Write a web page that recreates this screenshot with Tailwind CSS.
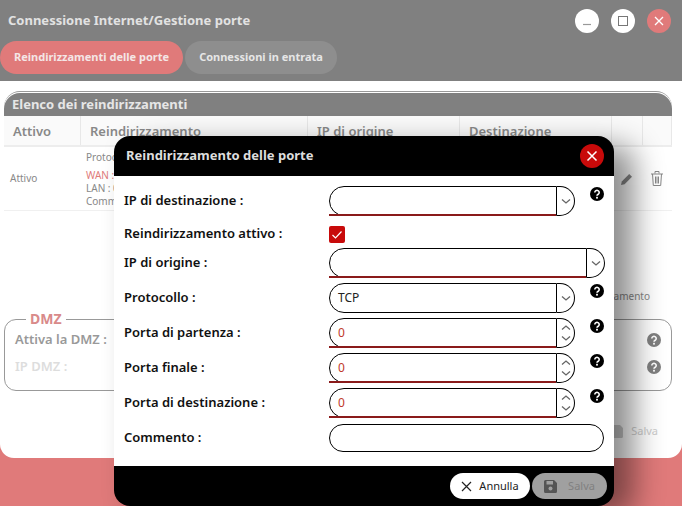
<!DOCTYPE html>
<html lang="it">
<head>
<meta charset="UTF-8">
<title>Gestione porte</title>
<script src="https://cdn.jsdelivr.net/npm/@tailwindcss/browser@4"></script>
</head>
<body class="relative h-[506px] w-[682px] overflow-hidden bg-[#e07a7a] font-['Noto_Sans','Liberation_Sans',sans-serif]">
  <!-- window -->
  <div class="flex h-[458px] flex-col overflow-hidden rounded-b-[14px] bg-white">
    <div class="h-[81px] shrink-0 bg-[#808080]">
      <div class="flex h-[41px] items-center justify-between pr-[11px] pl-2">
        <h1 class="text-[13px] font-bold text-[#e2e2e2]">Connessione Internet/Gestione porte</h1>
        <div class="flex gap-3">
          <button class="flex h-6 w-6 items-center justify-center rounded-full bg-white">
            <svg width="12" height="12" viewBox="0 0 12 12"><path d="M2 9.5h8" stroke="#999" stroke-width="1.2"/></svg>
          </button>
          <button class="flex h-6 w-6 items-center justify-center rounded-full bg-white">
            <svg width="12" height="12" viewBox="0 0 12 12"><rect x="1.5" y="1.5" width="9" height="9" fill="none" stroke="#777" stroke-width="1"/></svg>
          </button>
          <button class="flex h-6 w-6 items-center justify-center rounded-full bg-[#e07a7a]">
            <svg width="12" height="12" viewBox="0 0 12 12"><path d="M2 2l8 8M10 2l-8 8" stroke="#fff" stroke-width="1.3"/></svg>
          </button>
        </div>
      </div>
      <div class="flex gap-[2px]">
        <button class="flex h-[33px] w-[183px] items-center justify-center rounded-full bg-[#e07a7a] text-[11px] font-bold text-[#f4e6e6]">Reindirizzamenti delle porte</button>
        <button class="flex h-[33px] w-[152px] items-center justify-center rounded-full bg-[#8e8e8e] text-[11px] font-bold text-[#e6e6e6]">Connessioni in entrata</button>
      </div>
    </div>

    <div class="flex flex-1 flex-col pt-[10px] pr-[10px] pl-1">
      <!-- table -->
      <div class="rounded-t-[16px] border-t border-t-[#999] pt-[1px]">
        <div class="flex h-[23px] items-center rounded-t-[16px] bg-[#808080] pl-2 text-[13px] font-bold text-[#e6e6e6]">Elenco dei reindirizzamenti</div>
      </div>
      <div class="grid h-[31px] grid-cols-[76px_227px_152px_152px_31px_30px] border-b-2 border-[#ededed] bg-[#fafafa] text-[13px] font-semibold text-[#888]">
        <div class="pt-[6px] pl-[9px]">Attivo</div>
        <div class="border-l border-[#e8e8e8] pt-[6px] pl-[9px]">Reindirizzamento</div>
        <div class="border-l border-[#e8e8e8] pt-[6px] pl-[9px]">IP di origine</div>
        <div class="border-l border-[#e8e8e8] pt-[6px] pl-[9px]">Destinazione</div>
        <div class="border-l border-[#e8e8e8]"></div>
        <div class="border-x border-[#e8e8e8]"></div>
      </div>
      <div class="grid h-[64px] grid-cols-[76px_227px_152px_152px_31px_30px] border-b border-[#f0f0f0] text-[10px] text-[#888]">
        <div class="flex items-center pl-[6px]">Attivo</div>
        <div class="pt-[4px] pl-[6px] leading-[13px]">
          <div class="mb-[5px]">Protocollo : TCP</div>
          <div class="text-[#e07a7a]">WAN : 0</div>
          <div>LAN : 0</div>
          <div>Commento :</div>
        </div>
        <div></div>
        <div></div>
        <div class="flex items-center justify-center">
          <svg width="14" height="14" viewBox="0 0 14 14"><path d="M1 13l.8-3.6 7.4-7.4 2.8 2.8-7.4 7.4z" fill="#888"/></svg>
        </div>
        <div class="flex items-center justify-center">
          <svg width="14" height="17" viewBox="0 0 14 17" fill="none" stroke="#888" stroke-width="1"><path d="M1 4h12M5 3.5V1.5h4v2M2.5 4l.8 11.5h7.4L11.5 4M5.5 6.5v7M7 6.5v7M8.5 6.5v7"/></svg>
        </div>
      </div>

      <div class="mt-[78px] pr-[22px] text-right text-[10px] text-[#888]">Attiva il reindirizzamento</div>

      <fieldset class="mt-[8px] h-[79px] rounded-[12px] border border-[#999] px-[10px]">
        <legend class="ml-[11px] px-1 text-[14px] leading-[14px] font-bold text-[#d98a8a]">DMZ</legend>
        <div class="flex h-[27px] items-center justify-between text-[13px] font-semibold text-[#999]">
          <span>Attiva la DMZ :</span>
          <svg width="14" height="14" viewBox="0 0 14 14"><circle cx="7" cy="7" r="7" fill="#808080"/><path d="M4.8 5.4a2.2 2.1 0 1 1 3.4 1.8c-.8.5-1.2.9-1.2 1.6" fill="none" stroke="#fff" stroke-width="1.6"/><rect x="6.1" y="9.8" width="1.8" height="1.8" fill="#fff"/></svg>
        </div>
        <div class="flex h-[27px] items-center justify-between text-[13px] font-semibold text-[#ddd]">
          <span>IP DMZ :</span>
          <svg width="14" height="14" viewBox="0 0 14 14"><circle cx="7" cy="7" r="7" fill="#808080"/><path d="M4.8 5.4a2.2 2.1 0 1 1 3.4 1.8c-.8.5-1.2.9-1.2 1.6" fill="none" stroke="#fff" stroke-width="1.6"/><rect x="6.1" y="9.8" width="1.8" height="1.8" fill="#fff"/></svg>
        </div>
      </fieldset>

      <div class="mt-[32px] flex items-center justify-end gap-[8px] pr-[14px] text-[11px] text-[#ccc]">
        <svg width="13" height="13" viewBox="0 0 13 13"><path d="M0 1.5A1.5 1.5 0 0 1 1.5 0H10l3 3v8.5a1.5 1.5 0 0 1-1.500 1.500h-10A1.500 1.500 0 0 1 0 11.500z" fill="#ccc"/></svg>
        <span>Salva</span>
      </div>
    </div>
  </div>

  <!-- modal -->
  <div class="absolute top-[136px] left-[114px] flex h-[370px] w-[500px] flex-col overflow-hidden rounded-[16px] bg-black shadow-[20px_10px_30px_rgba(0,0,0,0.45)]">
    <div class="flex h-10 shrink-0 items-center justify-between pr-[10px] pl-3">
      <h2 class="text-[13px] font-bold text-[#ddd]">Reindirizzamento delle porte</h2>
      <button class="flex h-6 w-6 items-center justify-center rounded-full bg-[#c80a0a]">
        <svg width="12" height="12" viewBox="0 0 12 12"><path d="M1.500 1.500l9 9M10.500 1.500l-9 9" stroke="#fff" stroke-width="1.500"/></svg>
      </button>
    </div>

    <div class="flex flex-1 flex-col bg-white pt-[10px] pl-[10px]">
      <div class="mb-[5px] flex h-[30px] items-center">
        <label class="w-[205px] text-[13px] font-semibold text-[#111]">IP di destinazione :</label>
        <div class="relative h-[30px] w-[228px] rounded-l-[15px] border border-black bg-white">
          <span class="absolute right-0 -bottom-px -left-px h-[2px] bg-[#8a1a1a]"></span>
        </div>
        <div class="flex h-[30px] w-[18px] items-center justify-center rounded-r-[15px] border border-l-0 border-black">
          <svg width="10" height="7" viewBox="0 0 10 7"><path d="M1 1.500l4 3.500 4-3.500" fill="none" stroke="#666" stroke-width="1.300"/></svg>
        </div>
        <svg class="mb-[14px] ml-[15px]" width="14" height="14" viewBox="0 0 14 14"><circle cx="7" cy="7" r="7" fill="#000"/><path d="M4.800 5.400a2.200 2.100 0 1 1 3.400 1.800c-.8.500-1.200.900-1.200 1.600" fill="none" stroke="#fff" stroke-width="1.600"/><rect x="6.100" y="9.800" width="1.800" height="1.800" fill="#fff"/></svg>
      </div>

      <div class="mb-[5px] flex h-[22px] items-end">
        <label class="w-[205px] text-[13px] font-semibold text-[#111]">Reindirizzamento attivo :</label>
        <div class="flex h-[17px] w-[16px] items-center justify-center rounded-[2px] bg-[#c80a0a]">
          <svg width="12" height="10" viewBox="0 0 12 10"><path d="M1.500 5l3 3 6-6.500" fill="none" stroke="#fff" stroke-width="1.200"/></svg>
        </div>
      </div>

      <div class="mb-[5px] flex h-[30px] items-center">
        <label class="w-[205px] text-[13px] font-semibold text-[#111]">IP di origine :</label>
        <div class="relative h-[30px] w-[258px] rounded-l-[15px] border border-black bg-white">
          <span class="absolute right-0 -bottom-px -left-px h-[2px] bg-[#8a1a1a]"></span>
        </div>
        <div class="flex h-[30px] w-[18px] items-center justify-center rounded-r-[15px] border border-l-0 border-black">
          <svg width="10" height="7" viewBox="0 0 10 7"><path d="M1 1.500l4 3.500 4-3.500" fill="none" stroke="#666" stroke-width="1.300"/></svg>
        </div>
      </div>

      <div class="mb-[5px] flex h-[30px] items-center">
        <label class="w-[205px] text-[13px] font-semibold text-[#111]">Protocollo :</label>
        <div class="flex h-[30px] w-[228px] items-center rounded-l-[15px] border border-black pl-2 text-[12px] text-[#222]">TCP</div>
        <div class="flex h-[30px] w-[18px] items-center justify-center rounded-r-[15px] border border-l-0 border-black">
          <svg width="10" height="7" viewBox="0 0 10 7"><path d="M1 1.500l4 3.500 4-3.500" fill="none" stroke="#666" stroke-width="1.300"/></svg>
        </div>
        <svg class="mb-[14px] ml-[15px]" width="14" height="14" viewBox="0 0 14 14"><circle cx="7" cy="7" r="7" fill="#000"/><path d="M4.800 5.400a2.200 2.100 0 1 1 3.400 1.800c-.8.500-1.200.900-1.200 1.600" fill="none" stroke="#fff" stroke-width="1.600"/><rect x="6.100" y="9.800" width="1.800" height="1.800" fill="#fff"/></svg>
      </div>

      <div class="mb-[5px] flex h-[30px] items-center">
        <label class="w-[205px] text-[13px] font-semibold text-[#111]">Porta di partenza :</label>
        <div class="relative flex h-[30px] w-[228px] items-center rounded-l-[15px] border border-black pl-2 text-[12px] text-[#c0392b]">0
          <span class="absolute right-0 -bottom-px -left-px h-[2px] bg-[#8a1a1a]"></span>
        </div>
        <div class="flex h-[30px] w-[18px] flex-col items-center justify-center gap-[4px] rounded-r-[15px] border border-l-0 border-black">
          <svg width="10" height="7" viewBox="0 0 10 7"><path d="M1 5.500l4-3.500 4 3.500" fill="none" stroke="#666" stroke-width="1.300"/></svg>
          <svg width="10" height="7" viewBox="0 0 10 7"><path d="M1 1.500l4 3.500 4-3.500" fill="none" stroke="#666" stroke-width="1.300"/></svg>
        </div>
        <svg class="mb-[14px] ml-[15px]" width="14" height="14" viewBox="0 0 14 14"><circle cx="7" cy="7" r="7" fill="#000"/><path d="M4.800 5.400a2.200 2.100 0 1 1 3.400 1.800c-.8.500-1.200.900-1.200 1.600" fill="none" stroke="#fff" stroke-width="1.600"/><rect x="6.100" y="9.800" width="1.800" height="1.800" fill="#fff"/></svg>
      </div>

      <div class="mb-[5px] flex h-[30px] items-center">
        <label class="w-[205px] text-[13px] font-semibold text-[#111]">Porta finale :</label>
        <div class="relative flex h-[30px] w-[228px] items-center rounded-l-[15px] border border-black pl-2 text-[12px] text-[#c0392b]">0
          <span class="absolute right-0 -bottom-px -left-px h-[2px] bg-[#8a1a1a]"></span>
        </div>
        <div class="flex h-[30px] w-[18px] flex-col items-center justify-center gap-[4px] rounded-r-[15px] border border-l-0 border-black">
          <svg width="10" height="7" viewBox="0 0 10 7"><path d="M1 5.500l4-3.500 4 3.500" fill="none" stroke="#666" stroke-width="1.300"/></svg>
          <svg width="10" height="7" viewBox="0 0 10 7"><path d="M1 1.500l4 3.500 4-3.500" fill="none" stroke="#666" stroke-width="1.300"/></svg>
        </div>
        <svg class="mb-[14px] ml-[15px]" width="14" height="14" viewBox="0 0 14 14"><circle cx="7" cy="7" r="7" fill="#000"/><path d="M4.800 5.400a2.200 2.100 0 1 1 3.400 1.800c-.8.500-1.200.900-1.200 1.600" fill="none" stroke="#fff" stroke-width="1.600"/><rect x="6.100" y="9.800" width="1.800" height="1.800" fill="#fff"/></svg>
      </div>

      <div class="mb-[5px] flex h-[30px] items-center">
        <label class="w-[205px] text-[13px] font-semibold text-[#111]">Porta di destinazione :</label>
        <div class="relative flex h-[30px] w-[228px] items-center rounded-l-[15px] border border-black pl-2 text-[12px] text-[#c0392b]">0
          <span class="absolute right-0 -bottom-px -left-px h-[2px] bg-[#8a1a1a]"></span>
        </div>
        <div class="flex h-[30px] w-[18px] flex-col items-center justify-center gap-[4px] rounded-r-[15px] border border-l-0 border-black">
          <svg width="10" height="7" viewBox="0 0 10 7"><path d="M1 5.500l4-3.500 4 3.500" fill="none" stroke="#666" stroke-width="1.300"/></svg>
          <svg width="10" height="7" viewBox="0 0 10 7"><path d="M1 1.500l4 3.500 4-3.500" fill="none" stroke="#666" stroke-width="1.300"/></svg>
        </div>
        <svg class="mb-[14px] ml-[15px]" width="14" height="14" viewBox="0 0 14 14"><circle cx="7" cy="7" r="7" fill="#000"/><path d="M4.800 5.400a2.200 2.100 0 1 1 3.400 1.800c-.8.500-1.200.900-1.200 1.600" fill="none" stroke="#fff" stroke-width="1.600"/><rect x="6.100" y="9.800" width="1.800" height="1.800" fill="#fff"/></svg>
      </div>

      <div class="flex h-[29px] items-center">
        <label class="w-[205px] text-[13px] font-semibold text-[#111]">Commento :</label>
        <div class="h-[28px] w-[275px] rounded-full border border-black"></div>
      </div>
    </div>

    <div class="flex h-10 shrink-0 items-center justify-end gap-[2px] pr-[7px]">
      <button class="flex h-[26px] w-[80px] items-center justify-center gap-[7px] rounded-full bg-white text-[11px] text-[#222]">
        <svg width="11" height="11" viewBox="0 0 11 11"><path d="M1 1l9 9M10 1l-9 9" stroke="#222" stroke-width="1.200"/></svg>
        Annulla
      </button>
      <button class="flex h-[26px] w-[75px] items-center justify-center gap-[11px] rounded-full bg-[#a0a0a0] text-[11px] text-[#808080]">
        <svg width="13" height="13" viewBox="0 0 13 13"><path d="M0 1.500A1.500 1.500 0 0 1 1.500 0H10l3 3v8.500a1.500 1.500 0 0 1-1.500 1.500h-10A1.500 1.500 0 0 1 0 11.500z" fill="#555"/><rect x="2.500" y="1" width="6.500" height="3.500" fill="#a0a0a0"/><circle cx="6.500" cy="8.500" r="2" fill="#a0a0a0"/></svg>
        Salva
      </button>
    </div>
  </div>
</body>
</html>
